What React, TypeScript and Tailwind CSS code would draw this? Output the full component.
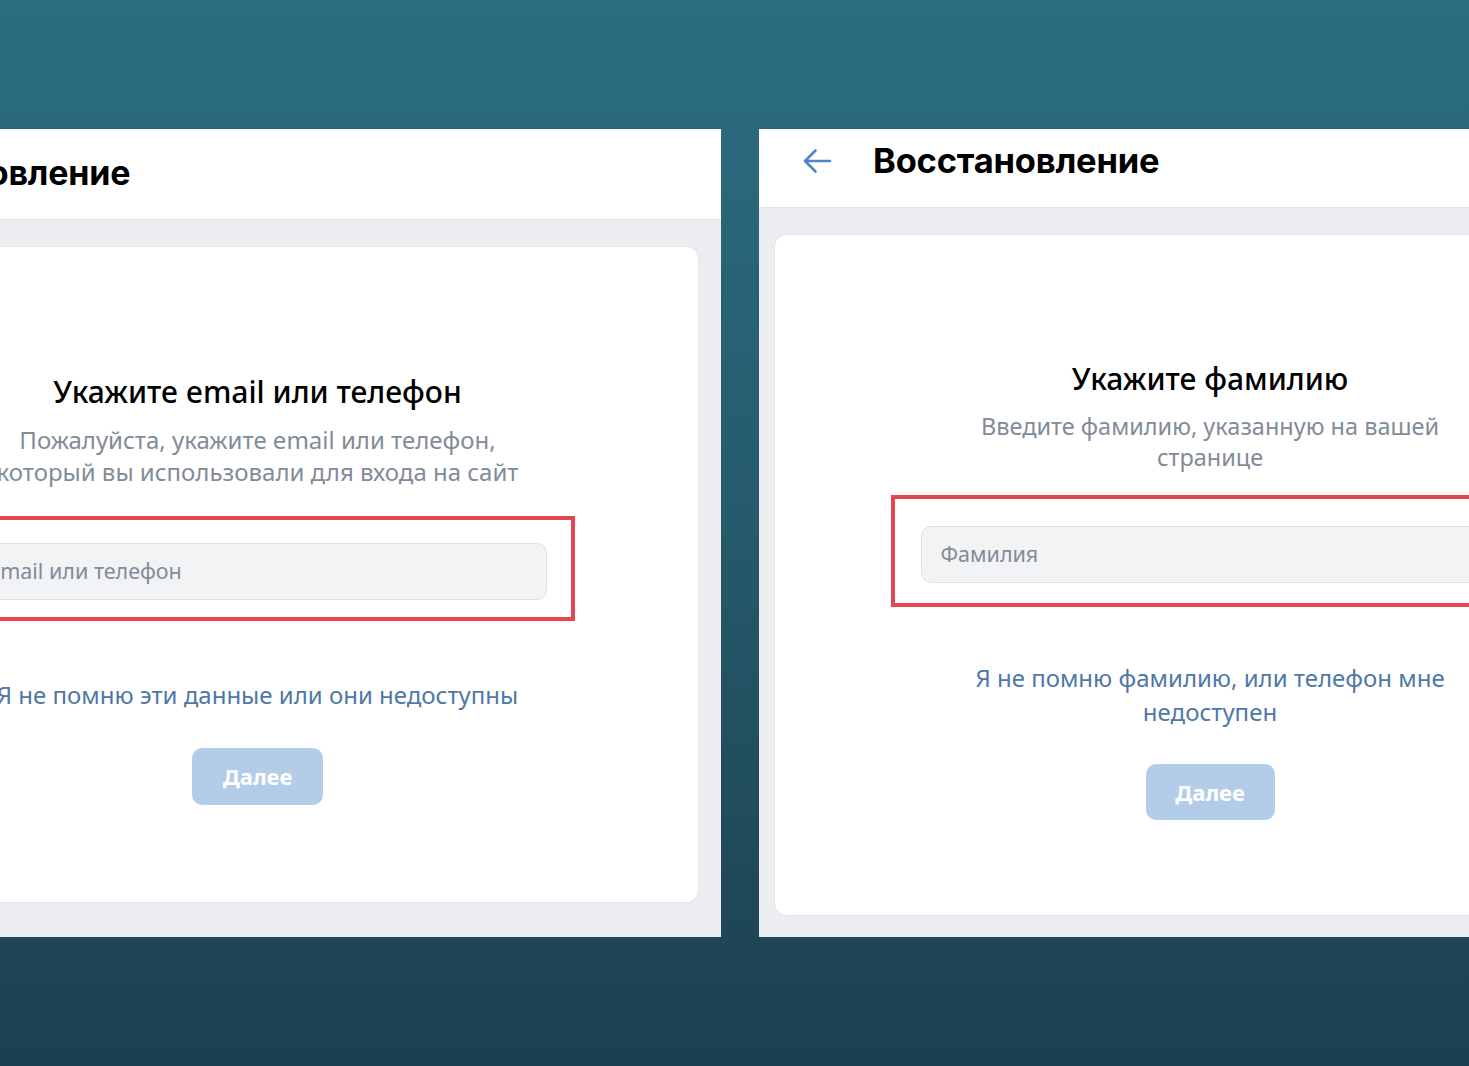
import React from "react";

type Step = {
  heading: string;
  sub: string;
  placeholder: string;
  link: string;
  // vertical rhythm, measured off the two screenshots
  pt: string;
  subMt: string;
  inputMt: string;
  linkMt: string;
  btnMt: string;
  inputH: string;
  btnH: string;
  subText: string;
  linkLh: string;
  mark: string;
};

const EMAIL: Step = {
  heading: "Укажите email или телефон",
  sub: "Пожалуйста, укажите email или телефон, который вы использовали для входа на сайт",
  placeholder: "email или телефон",
  link: "Я не помню эти данные или они недоступны",
  pt: "pt-[127px]",
  subMt: "mt-[14px]",
  inputMt: "mt-[55px]",
  linkMt: "mt-[79px]",
  btnMt: "mt-[37px]",
  inputH: "h-[57px]",
  btnH: "h-[57px] w-[131px]",
  subText: "text-[24px] leading-[32px]",
  linkLh: "leading-[32px]",
  mark: "-top-[27px] -bottom-[21px] -left-[28px] -right-[28px]",
};

const SURNAME: Step = {
  heading: "Укажите фамилию",
  sub: "Введите фамилию, указанную на вашей странице",
  placeholder: "Фамилия",
  link: "Я не помню фамилию, или телефон мне недоступен",
  pt: "pt-[126px]",
  subMt: "mt-[14px]",
  inputMt: "mt-[53px]",
  linkMt: "mt-[78px]",
  btnMt: "mt-[35px]",
  inputH: "h-[57px]",
  btnH: "h-[56px] w-[129px]",
  subText: "text-[23.5px] leading-[31px]",
  linkLh: "leading-[34px]",
  mark: "-top-[31px] -bottom-[24px] -left-[30px] -right-[30px]",
};

function BackArrow() {
  return (
    <svg width="30" height="26" viewBox="0 0 30 26" fill="none" className="text-[#4a86c8]">
      <path
        d="M28 13H3M13.5 2.5 3 13l10.5 10.5"
        stroke="currentColor"
        strokeWidth="2.6"
        strokeLinecap="round"
        strokeLinejoin="round"
      />
    </svg>
  );
}

function StepCard({ s, cardH }: { s: Step; cardH: string }) {
  return (
    <div
      className={`flex flex-col items-center rounded-[12px] bg-white shadow-[0_0_0_1px_#e4e6ea] ${cardH} ${s.pt}`}
    >
      <h2 className="text-[30px] font-medium leading-[36px] text-[#000]">{s.heading}</h2>
      <p className={`${s.subMt} max-w-[545px] text-center text-[#818c99] ${s.subText}`}>
        {s.sub}
      </p>
      <div className={`relative ${s.inputMt} w-[579px]`}>
        <div
          className={`flex items-center rounded-[10px] border border-[#dce1e6] bg-[#f2f3f5] px-[19px] text-[21.5px] text-[#818c99] ${s.inputH}`}
        >
          {s.placeholder}
        </div>
        {/* annotation frame drawn over the field */}
        <div className={`pointer-events-none absolute border-[4px] border-[#e2474e] ${s.mark}`} />
      </div>
      <a className={`${s.linkMt} max-w-[545px] text-center text-[24px] text-[#4f78a6] ${s.linkLh}`}>
        {s.link}
      </a>
      <button
        className={`${s.btnMt} rounded-[10px] bg-[#b3cde9] text-[22px] font-bold text-white ${s.btnH}`}
      >
        Далее
      </button>
    </div>
  );
}

export default function App() {
  return (
    <div
      className="h-[1066px] w-full overflow-hidden bg-gradient-to-b from-[#2b6e81] via-[#255a6b] to-[#1c404f] pt-[129px]"
      style={{ fontFamily: '"Noto Sans", "Open Sans", sans-serif' }}
    >
      <div className="flex h-[808px] gap-[38px]">
        {/* left shot: cropped on its left side */}
        <div className="h-full w-[721px] shrink-0 overflow-hidden">
          <div className="ml-[-206px] flex h-full w-[927px] flex-col bg-[#ebedf0]">
            <header className="flex h-[91px] shrink-0 items-center border-b border-[#e1e3e6] bg-white pl-[54px] pb-[4px]">
              <span
                className="text-[34px] font-bold tracking-[-0.2px] text-black"
                style={{ fontFamily: 'Inter, "Liberation Sans", sans-serif' }}
              >
                Восстановление
              </span>
            </header>
            <div className="px-[23px] pt-[27px]">
              <StepCard s={EMAIL} cardH="h-[655px]" />
            </div>
          </div>
        </div>

        {/* right shot: cropped on its right side */}
        <div className="h-full flex-1 overflow-hidden">
          <div className="flex h-full w-[902px] flex-col bg-[#ebedf0]">
            <header className="flex h-[79px] shrink-0 items-center border-b border-[#e1e3e6] bg-white pl-[43px] pb-[14px]">
              <BackArrow />
              <span
                className="ml-[41px] text-[34.5px] font-bold tracking-[-0.2px] text-black"
                style={{ fontFamily: 'Inter, "Liberation Sans", sans-serif' }}
              >
                Восстановление
              </span>
            </header>
            <div className="px-[16px] pt-[27px]">
              <StepCard s={SURNAME} cardH="h-[680px]" />
            </div>
          </div>
        </div>
      </div>
    </div>
  );
}
